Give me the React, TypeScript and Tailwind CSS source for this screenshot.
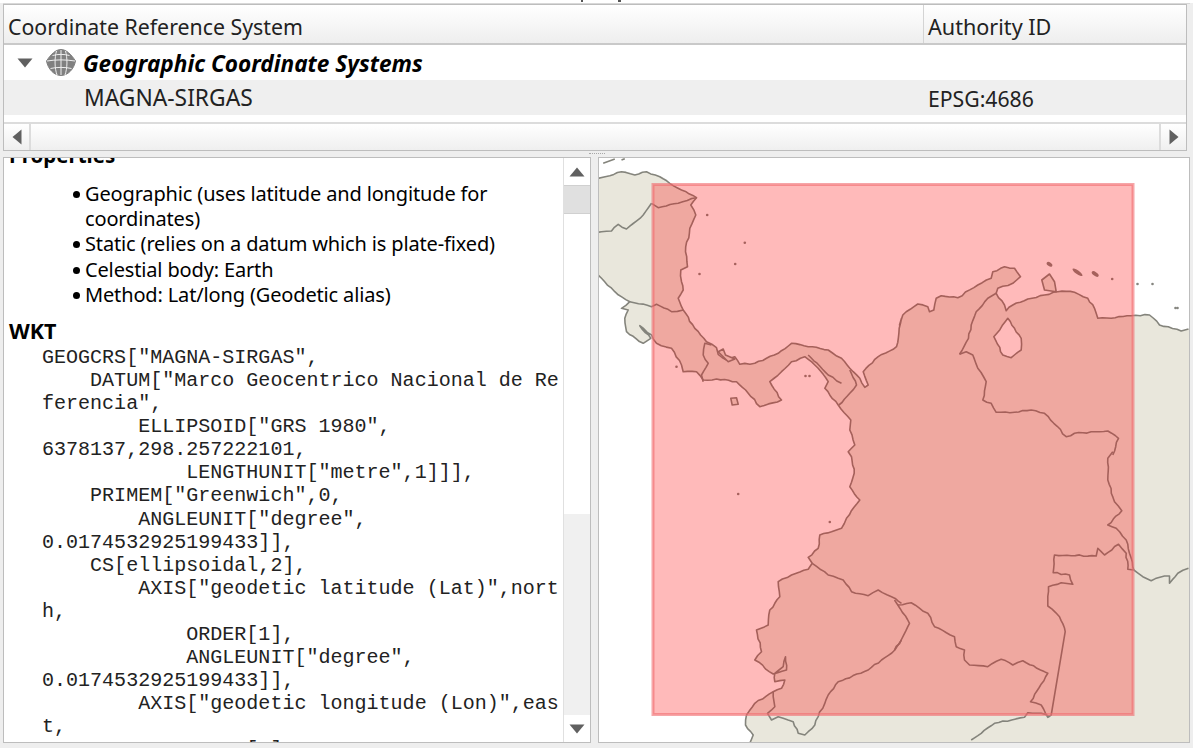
const z = (ox: number, oy: number, pts: number[][]) => pts.map(([x, y]) => [ox + x / 3, oy + y / 3]);
const Z3 = (p: number[][]) => z(600, 155, p);
const Z4 = (p: number[][]) => z(893, 155, p);
const Z5 = (p: number[][]) => z(600, 450, p);
const Z6 = (p: number[][]) => z(893, 450, p);

// Natural outline: long segments get small, repeatable wobbles; very long (surveyed) borders stay straight.
function rough(pts: number[][]) {
  const out: number[][] = [];
  let seed = 7;
  const rnd = () => {
    seed = (seed * 9301 + 49297) % 233280;
    return seed / 233280 - 0.5;
  };
  pts.forEach((p, i) => {
    out.push(p);
    const q = pts[i + 1];
    if (!q) return;
    const dx = q[0] - p[0];
    const dy = q[1] - p[1];
    const len = Math.hypot(dx, dy);
    if (len > 60 || len < 5) return;
    const n = Math.floor(len / 4);
    for (let k = 1; k < n; k++) {
      const t = k / n;
      const a = rnd() * 1.5;
      out.push([p[0] + dx * t - (dy / len) * a, p[1] + dy * t + (dx / len) * a]);
    }
  });
  return out;
}
const str = (p: number[][]) => p.map(([x, y]) => `${x.toFixed(1)} ${y.toFixed(1)}`).join("L");
const line = (p: number[][]) => "M" + str(p);

const caribbean = rough([
  ...Z3([[-10,70],[25,62],[60,50],[100,60],[135,50],[175,65],[205,85],[240,105],[285,128],[268,150],[283,180],[265,220],[252,290],[258,335],[238,345],[240,380],[245,405],[230,430],[245,465],[280,520],[315,560],[345,578],[350,598],[375,615],[400,605],[415,628],[460,625],[530,595],[570,565],[620,575],[680,585],[720,610],[745,640],[775,670],[790,697],[800,690],[785,650],[830,605],[885,575],[893,520],[900,490]]),
  ...Z4([[15,510],[25,480],[70,447],[100,455],[105,470],[118,465],[125,430],[140,422],[190,428],[250,390],[290,370],[295,350],[330,335],[360,340],[378,365],[355,385],[310,400],[305,415],[330,450],[335,467],[355,450],[400,432],[450,420],[490,410],[540,412],[580,430],[600,460],[610,490],[650,490],[710,482],[765,480],[795,510],[860,528],[882,522]]),
]);
const east = rough(Z6([[718,360],[745,380],[770,392],[810,378],[825,378],[825,400],[850,370],[882,355]]));
const pacific = rough([
  ...Z5([[445,880],[455,855],[432,825],[435,795],[460,760],[515,725],[540,715],[550,690],[520,695],[520,670],[545,650],[552,620],[555,660],[515,672],[460,630],[480,605],[465,540],[500,525],[505,480],[535,440],[530,395],[570,375],[620,358],[632,340],[620,322],[650,295],[655,255],[690,245],[720,235],[735,205],[775,150],[745,110],[758,70],[750,20],[740,5]]),
  ...Z3([[740,890],[760,870],[745,825],[748,795],[710,750],[670,700],[680,680],[640,630],[610,605],[570,620],[540,650],[505,680],[540,735],[475,755],[440,715],[405,680],[345,672],[305,675],[285,650],[245,650],[240,630],[210,580],[165,565],[150,540],[115,512],[148,550],[125,565],[75,530],[70,490],[80,465],[60,460],[85,440],[40,410],[0,370],[-10,360]]),
]);
const land = "M" + str(caribbean) + "L1190 330L1190 745L745 745L" + str(pacific) + "Z";

const borders = [
  Z3([[150,145],[170,158],[230,145],[285,128]]),
  Z3([[150,145],[125,180],[75,222],[50,208],[30,228],[0,230],[-10,232]]),
  Z3([[85,440],[150,455],[165,448],[210,470],[245,465]]),
  Z3([[305,680],[300,660],[320,625],[305,600],[310,565],[330,570]]),
  Z3([[745,645],[765,690],[745,715],[712,750]]),
  Z3([[620,600],[680,660],[720,685]]),
  Z4([[195,598],[215,590],[235,600],[250,640],[275,680],[265,735],[290,745],[305,772],[360,772],[410,765],[450,775],[515,845],[540,835],[640,828],[672,850],[655,900]]),
  Z4([[305,415],[280,430],[245,470],[230,510],[222,550],[195,598]]),
  Z6([[655,5],[640,25],[640,90],[660,155],[682,182],[640,225],[665,235],[695,270],[715,350],[718,360],[700,358],[695,310],[672,283],[630,315],[610,295],[605,318],[480,315],[476,368],[525,375],[535,403],[500,398],[462,410],[460,468],[495,500],[512,545],[470,795],[460,802],[440,765],[408,755],[460,670],[385,632],[355,645],[320,628],[280,650],[225,645],[210,630],[210,600],[185,590],[180,560],[120,530],[100,490],[50,458],[10,465],[0,450]]),
  Z6([[10,465],[45,520],[40,530],[20,570],[0,600]]),
  Z5([[632,340],[680,375],[725,390],[750,425],[800,437],[830,420],[870,440],[900,460]]),
  Z5([[900,570],[880,600],[800,660],[710,695],[680,735],[650,800],[640,825],[610,855],[590,850],[575,815],[530,800],[510,810],[498,790],[520,770],[515,725]]),
  Z6([[230,870],[260,850],[300,820],[390,802],[400,788],[440,790],[465,800]]),
].map(rough);
const lake = rough(Z4([[340,490],[298,545],[325,600],[350,608],[380,585],[380,550],[340,490]]));
const landBits = [
  Z4([[450,405],[442,375],[465,357],[480,380],[485,410],[450,405]]),
  Z3([[388,730],[405,728],[410,748],[392,750],[388,730]]),
  Z3([[350,590],[365,582],[372,600],[400,612],[380,620],[350,590]]),
];
const dots: number[][] = [
  [705.7,215],[743.3,242.7],[733.7,264],[698,274],[675,366.7],[736.7,494],[828.3,522],[804,376],[808,376],[1110.7,279],[1136,284],[1151,284],[1174,308],[1176,308],
];
const isles: number[][] = [[1048,264.3,3.2],[1076,272.3,6],[1093.7,274,4]];

const wkt = `GEOGCRS["MAGNA-SIRGAS",
    DATUM["Marco Geocentrico Nacional de Re
ferencia",
        ELLIPSOID["GRS 1980",
6378137,298.257222101,
            LENGTHUNIT["metre",1]]],
    PRIMEM["Greenwich",0,
        ANGLEUNIT["degree",
0.0174532925199433]],
    CS[ellipsoidal,2],
        AXIS["geodetic latitude (Lat)",nort
h,
            ORDER[1],
            ANGLEUNIT["degree",
0.0174532925199433]],
        AXIS["geodetic longitude (Lon)",eas
t,
            ORDER[2],`;

function Tri({ dir, className }: { dir: "l" | "r" | "u" | "d"; className?: string }) {
  if (dir === "l" || dir === "r") {
    return (
      <svg width="10" height="16" viewBox="0 0 10 16" className={className}>
        <path d={dir === "l" ? "M9.5 0.5 V15.5 L0.5 8Z" : "M0.5 0.5 V15.5 L9.5 8Z"} fill="#606060" />
      </svg>
    );
  }
  return (
    <svg width="16" height="10" viewBox="0 0 16 10" className={className}>
      <path d={dir === "u" ? "M0.5 9.5 H15.5 L8 0.5Z" : "M0.5 0.5 H15.5 L8 9.5Z"} fill="#606060" />
    </svg>
  );
}

function Globe() {
  return (
    <svg width="30" height="27" viewBox="0 0 30 27" fill="none" stroke="#eeeeee" strokeWidth="1">
      <path d="M15 0.5 C10 0.5 5 5 0.5 12 C2 20 8 26.5 15 26.5 C22 26.5 28 20 29.5 12 C25 5 20 0.5 15 0.5Z" fill="#808080" stroke="#808080" />
      <path d="M1 12 C10 10.5 20 10.5 29 12" />
      <path d="M4.5 19.5 C11 18 19 18 25.5 19.5" />
      <path d="M6.5 6.5 C12 5 18 5 23.5 6.5" />
      <path d="M15 1 V26" />
      <path d="M10.5 2 C8.5 9 8.5 19 11 26" />
      <path d="M19.5 2 C21.5 9 21.5 19 19 26" />
    </svg>
  );
}

export default function App() {
  return (
    <div className="flex h-[748px] w-[1193px] flex-col overflow-hidden bg-[#eeeeee] px-[3px] pb-[5px] text-[#222222] font-['Noto_Sans','Open_Sans',sans-serif]">
      <div className="-mx-[3px] flex h-[3px] shrink-0 items-start bg-white pl-[581px]">
        <span className="h-[2px] w-[2px] bg-[#555555]" />
        <span className="ml-[35px] h-[2px] w-[3px] bg-[#555555]" />
      </div>
      <div className="h-px shrink-0 bg-[#d8d8d8]" />
      <section className="flex h-[147px] w-[1184px] shrink-0 flex-col border border-[#bdbdbd] bg-white">
        <div className="flex h-[40px] shrink-0 border-b-2 border-[#c9c9c9] bg-gradient-to-b from-white to-[#eeeeee] text-[21.3px] leading-[43px]">
          <div className="w-[920px] truncate border-r border-[#d4d4d4] pl-1">Coordinate Reference System</div>
          <div className="flex-1 pl-1 text-[21.6px]">Authority ID</div>
        </div>
        <div className="flex h-[35px] shrink-0 items-center text-black">
          <Tri dir="d" className="ml-[13px] mr-[13px]" />
          <Globe />
          <span className="ml-[7px] pt-[3px] text-[22.6px] font-bold italic leading-none">Geographic Coordinate Systems</span>
        </div>
        <div className="flex h-[35px] shrink-0 items-center bg-[#efefef] pt-[2px] text-[22.8px]">
          <div className="w-[920px] pl-[80px]">MAGNA-SIRGAS</div>
          <div className="pl-[4px] text-[21.2px]">EPSG:4686</div>
        </div>
        <div className="h-[7px] shrink-0" />
        <div className="flex h-[28px] shrink-0 items-center justify-between border-t-2 border-[#dcdcdc] bg-gradient-to-b from-white to-[#efefef]">
          <div className="flex h-full w-[27px] items-center justify-center border-r-2 border-[#dcdcdc]"><Tri dir="l" /></div>
          <div className="flex h-full w-[27px] items-center justify-center border-l-2 border-[#dcdcdc]"><Tri dir="r" /></div>
        </div>
      </section>

      <div className="relative mt-[6px] flex min-h-0 flex-1 gap-[7px]">
        <section className="flex w-[588px] overflow-hidden border border-[#bdbdbd] bg-white">
          <div className="min-w-0 flex-1 overflow-hidden">
            <div className="-mt-[15px] pl-[5px]">
              <h3 className="text-[20.5px] font-bold leading-[25px] text-black">Properties</h3>
              <ul className="ml-[63px] mt-[13px] list-none text-[20px] leading-[25.2px] tracking-[-0.15px] text-black">
                {["Geographic (uses latitude and longitude for coordinates)", "Static (relies on a datum which is plate-fixed)", "Celestial body: Earth", "Method: Lat/long (Geodetic alias)"].map((t) => (
                  <li key={t} className="relative w-[425px] pl-[13px]">
                    <span className="absolute left-[1px] top-[10px] h-[7px] w-[7px] rounded-full bg-black" />
                    {t}
                  </li>
                ))}
              </ul>
              <h3 className="mt-[11px] text-[21.5px] font-bold leading-[25px] text-black">WKT</h3>
              <pre className="ml-[33px] mt-[3px] font-['Liberation_Mono',monospace] text-[20.05px] leading-[23.08px] text-[#222222]">{wkt}</pre>
            </div>
          </div>
          <div className="flex w-[27px] shrink-0 flex-col border-l border-[#e0e0e0] bg-[#f0f0f0]">
            <div className="flex h-[27px] items-center justify-center bg-white"><Tri dir="u" /></div>
            <div className="h-[29px] border-y border-[#d0d0d0] bg-[#e0e0e0]" />
            <div className="h-[300px] bg-white" />
            <div className="flex-1" />
            <div className="flex h-[27px] items-center justify-center bg-white"><Tri dir="d" /></div>
          </div>
        </section>

        <section className="min-w-0 flex-1 overflow-hidden border border-[#bdbdbd] bg-white">
          <svg viewBox="599 158 587 584" className="block h-full w-full">
            <path d={land} fill="#e9e7dc" stroke="none" />
            <g fill="none" stroke="#84847c" strokeWidth="1.6" strokeLinejoin="round">
              <path d={line(caribbean)} />
              <path d={line(pacific)} />
              <path d={line(east)} />
              {borders.map((b, i) => <path key={i} d={line(b)} />)}
              <path d={line(lake) + "Z"} fill="#ffffff" />
              {landBits.map((s, i) => <path key={i} d={line(s) + "Z"} fill="#e9e7dc" />)}
              <path d={line(Z3([[5,25],[40,12]]))} />
              <path d={line(Z3([[60,15],[70,11]]))} />
            </g>
            <g fill="#85857f">
              {dots.map(([x, y], i) => <circle key={i} cx={x} cy={y} r="1.3" />)}
              {isles.map(([x, y, r], i) => <ellipse key={i} cx={x} cy={y} rx={r} ry="1.9" transform={`rotate(35 ${x} ${y})`} />)}
            </g>
            <rect x="651.5" y="184.5" width="480" height="530" fill="#ff0000" fillOpacity="0.27" stroke="#f06a6e" strokeOpacity="0.6" strokeWidth="3" />
          </svg>
        </section>

        <div className="absolute left-[586px] -top-[4px] h-[2px] w-[16px] border-t border-dotted border-[#a8a8a8]" />
      </div>
    </div>
  );
}
